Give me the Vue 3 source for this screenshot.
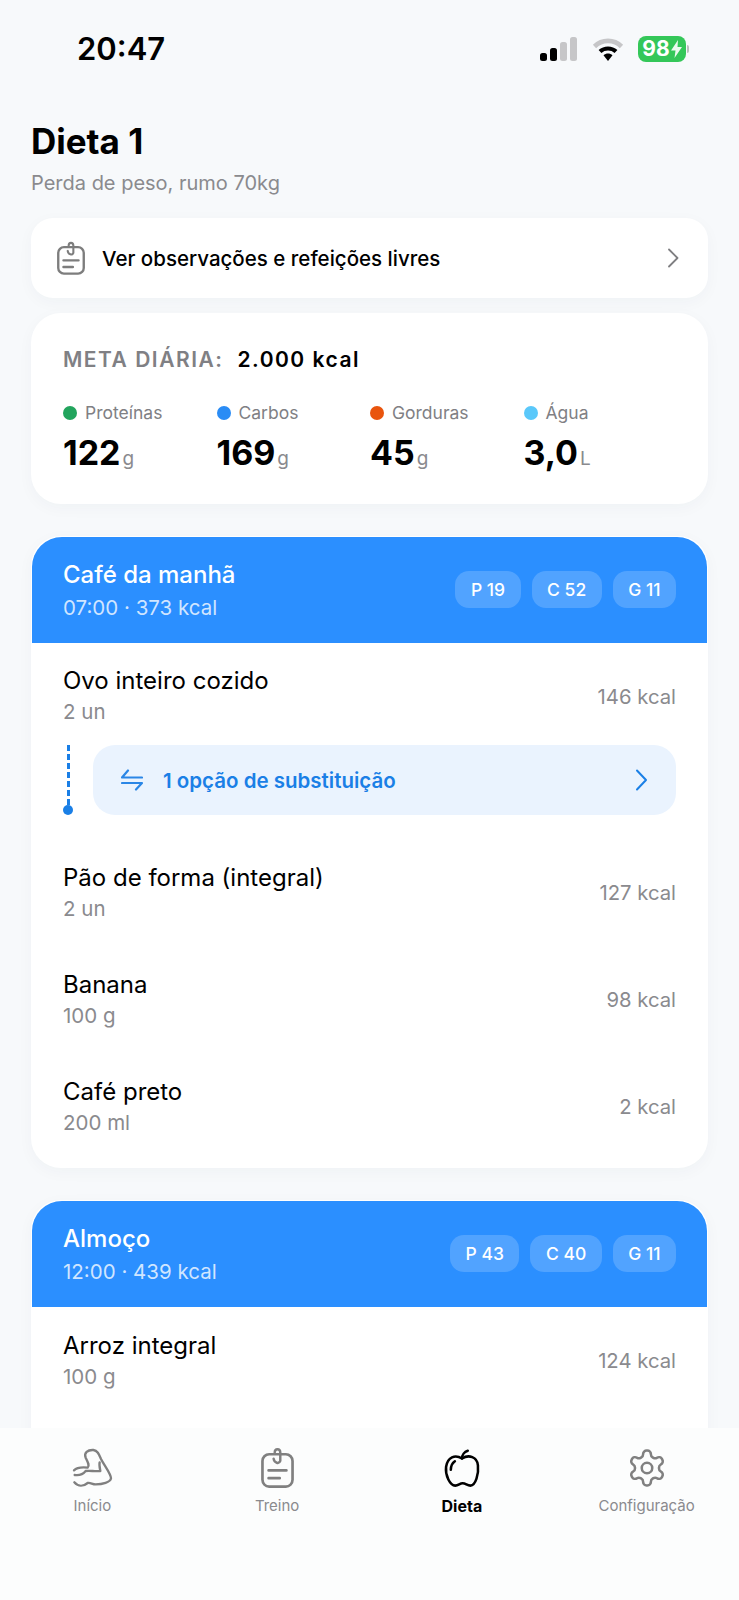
<script setup>
const macros = [
  { label: 'Proteínas', color: '#22a45d', value: '122', unit: 'g' },
  { label: 'Carbos', color: '#2a8cf5', value: '169', unit: 'g' },
  { label: 'Gorduras', color: '#e9540d', value: '45', unit: 'g' },
  { label: 'Água', color: '#5ac8fa', value: '3,0', unit: 'L' },
]
const meals = [
  {
    name: 'Café da manhã', info: '07:00 · 373 kcal', chips: ['P 19', 'C 52', 'G 11'],
    items: [
      { name: 'Ovo inteiro cozido', qty: '2 un', kcal: '146 kcal', sub: '1 opção de substituição' },
      { name: 'Pão de forma (integral)', qty: '2 un', kcal: '127 kcal' },
      { name: 'Banana', qty: '100 g', kcal: '98 kcal' },
      { name: 'Café preto', qty: '200 ml', kcal: '2 kcal' },
    ],
  },
  {
    name: 'Almoço', info: '12:00 · 439 kcal', chips: ['P 43', 'C 40', 'G 11'], open: true,
    items: [{ name: 'Arroz integral', qty: '100 g', kcal: '124 kcal' }],
  },
]
const gear = 'M12.22 2h-.44a2 2 0 0 0-2 2v.18a2 2 0 0 1-1 1.73l-.43.25a2 2 0 0 1-2 0l-.15-.08a2 2 0 0 0-2.73.73l-.22.38a2 2 0 0 0 .73 2.73l.15.1a2 2 0 0 1 1 1.72v.51a2 2 0 0 1-1 1.74l-.15.09a2 2 0 0 0-.73 2.73l.22.38a2 2 0 0 0 2.73.73l.15-.08a2 2 0 0 1 2 0l.43.25a2 2 0 0 1 1 1.73V20a2 2 0 0 0 2 2h.44a2 2 0 0 0 2-2v-.18a2 2 0 0 1 1-1.73l.43-.25a2 2 0 0 1 2 0l.15.08a2 2 0 0 0 2.73-.73l.22-.39a2 2 0 0 0-.73-2.73l-.15-.08a2 2 0 0 1-1-1.74v-.5a2 2 0 0 1 1-1.74l.15-.09a2 2 0 0 0 .73-2.73l-.22-.38a2 2 0 0 0-2.73-.73l-.15.08a2 2 0 0 1-2 0l-.43-.25a2 2 0 0 1-1-1.73V4a2 2 0 0 0-2-2z'
</script>

<template>
  <div class="page">
    <header class="status">
      <span class="time">20:47</span>
      <div class="status-icons">
        <svg width="37" height="24" viewBox="0 0 37 24">
          <rect x="0" y="16" width="7" height="8" rx="2.5" fill="#000" />
          <rect x="10" y="11" width="7" height="13" rx="2.5" fill="#000" />
          <rect x="20" y="5" width="7" height="19" rx="2.5" fill="#c6c6c8" />
          <rect x="30" y="0" width="7" height="24" rx="2.5" fill="#c6c6c8" />
        </svg>
        <svg class="wifi" width="32" height="24" viewBox="0 0 32 24" fill="none">
          <path d="M2.5 9.5C10 2 22 2 29.5 9.5" stroke="#c6c6c8" stroke-width="4.6" />
          <path d="M8 14.5C12.5 10.5 19.500 10.500 24 14.5" stroke="#000" stroke-width="4.2" />
          <path d="M11.500 18.200C14 16 18 16 20.500 18.200L16 24Z" fill="#000" />
        </svg>
        <div class="battery">
          <div class="battery-body">
            <span>98</span>
            <svg width="11" height="18" viewBox="0 0 11 18"><path d="M7 0L0 10.500H4.500L3.500 18L11 7H6.500Z" fill="#fff" fill-opacity=".9" /></svg>
          </div>
          <i class="battery-cap"></i>
        </div>
      </div>
    </header>

    <main class="content">
      <h1>Dieta 1</h1>
      <p class="subtitle">Perda de peso, rumo 70kg</p>

      <div class="card notes">
        <svg width="32" height="34" viewBox="-0.5 0 32 36" fill="none" stroke="#7d7d7d" stroke-width="2.500" stroke-linecap="round">
          <rect x="2" y="6.500" width="27" height="28" rx="6" />
          <path d="M12 10.500C12.500 14.500 17 15.500 18 12.500V5C18 1 13 1 13 5" stroke-width="2.200" />
          <path d="M7.500 20.500H23.500M7.500 27.500H17.500" />
        </svg>
        <span class="notes-text">Ver observações e refeições livres</span>
        <svg width="12" height="20" viewBox="0 0 12 20" fill="none" stroke="#7f7f82" stroke-width="1.800" stroke-linecap="round" stroke-linejoin="round"><path d="M2 1.500L10.500 10L2 18.500" /></svg>
      </div>

      <section class="card goal">
        <div class="goal-line"><span class="goal-label">META DIÁRIA:</span><span class="goal-value">2.000 kcal</span></div>
        <div class="macros">
          <div v-for="m in macros" :key="m.label" class="macro">
            <div class="macro-label"><i :style="{ background: m.color }"></i>{{ m.label }}</div>
            <div class="macro-value">{{ m.value }}<small>{{ m.unit }}</small></div>
          </div>
        </div>
      </section>

      <section v-for="meal in meals" :key="meal.name" class="meal" :class="{ open: meal.open }">
        <div class="meal-head">
          <div>
            <div class="meal-name">{{ meal.name }}</div>
            <div class="meal-info">{{ meal.info }}</div>
          </div>
          <div class="chips"><span v-for="c in meal.chips" :key="c" class="chip">{{ c }}</span></div>
        </div>
        <template v-for="item in meal.items" :key="item.name">
          <div class="row" :class="{ 'has-sub': item.sub }">
            <div>
              <div class="row-name">{{ item.name }}</div>
              <div class="row-qty">{{ item.qty }}</div>
            </div>
            <span class="row-kcal">{{ item.kcal }}</span>
          </div>
          <div v-if="item.sub" class="sub-wrap">
            <div class="connector"><i class="dash"></i><i class="dot"></i></div>
            <div class="sub">
              <svg width="22" height="24" viewBox="0 0 22 24" fill="none" stroke="#2a86e6" stroke-width="2.200" stroke-linecap="round" stroke-linejoin="round">
                <path d="M7 2.500L1 9.500H21M1 15H21L15 21.500" />
              </svg>
              <span class="sub-text">{{ item.sub }}</span>
              <svg width="13" height="22" viewBox="0 0 13 22" fill="none" stroke="#1a7fe6" stroke-width="2" stroke-linecap="round" stroke-linejoin="round"><path d="M2 1.500L11 11L2 20.500" /></svg>
            </div>
          </div>
        </template>
      </section>
    </main>

    <nav class="tabs">
      <div class="tab">
        <svg width="51" height="42" viewBox="6 6 153 126" fill="none" stroke="#808080" stroke-width="7" stroke-linecap="round" stroke-linejoin="round">
          <path d="M27 76C37 66 50 66 68 68C75 62 68 50 62 38C56 24 68 14 85 15C98 17 102 28 108 42C118 62 138 86 138 100C136 112 112 118 92 118C82 118 76 112 68 114C56 124 40 126 28 112" />
          <path d="M29 90C42 92 54 88 62 78C75 76 90 80 106 78C104 68 102 60 104 52" />
        </svg>
        <span>Início</span>
      </div>
      <div class="tab">
        <svg width="39" height="42" viewBox="-2 0 35 37.700" fill="none" stroke="#808080" stroke-width="2.400" stroke-linecap="round">
          <rect x="2" y="6.500" width="27" height="29" rx="6" />
          <path d="M12 10.500C12.500 14.500 17 15.500 18 12.500V5C18 1 13 1 13 5" stroke-width="2.200" />
          <path d="M7.500 21H23.500M7.500 28H17.500" />
        </svg>
        <span>Treino</span>
      </div>
      <div class="tab active">
        <svg width="40" height="42" viewBox="66 52 118 122" fill="none" stroke="#000" stroke-width="7.500" stroke-linecap="round" stroke-linejoin="round">
          <path d="M125 85C105 72 82 80 78 110C75 135 90 165 105 165C115 165 118 158 127 158C136 158 140 165 150 165C165 165 175 130 172 105C170 80 145 72 125 85Z" />
          <path d="M125 85C125 75 132 65 142 62M92 118C92 105 97 98 104 93" />
        </svg>
        <span>Dieta</span>
      </div>
      <div class="tab">
        <svg width="42" height="42" viewBox="0 0 24 24" fill="none" stroke="#808080" stroke-width="1.450" stroke-linecap="round" stroke-linejoin="round">
          <path :d="gear" />
          <circle cx="12" cy="12" r="3" />
        </svg>
        <span>Configuração</span>
      </div>
    </nav>
  </div>
</template>

<style scoped>
.page {
  position: relative;
  width: 739px;
  height: 1600px;
  overflow: hidden;
  background: #f7f9fb;
  color: #000;
  font-family: Inter, "Liberation Sans", sans-serif;
}
.status {
  height: 98px;
  display: flex;
  justify-content: space-between;
  align-items: flex-start;
  padding: 31px 50px 0 77px;
  box-sizing: border-box;
}
.time { font-size: 31px; line-height: 36px; font-weight: 600; }
.status-icons { display: flex; align-items: center; height: 36px; }
.status-icons > svg:first-child { margin: 0 15px 0 0; }
.wifi { margin-right: 14px; }
.battery { display: flex; align-items: center; }
.battery-body {
  width: 48px;
  height: 26px;
  border-radius: 8px;
  background: #34c759;
  color: #fff;
  font-size: 21px;
  font-weight: 700;
  line-height: 26px;
  display: flex;
  align-items: center;
  justify-content: center;
  gap: 1px;
}
.battery-cap { width: 2px; height: 8px; margin-left: 1px; border-radius: 0 2px 2px 0; background: #bdbdbd; }
.content { padding: 0 31px; }
h1 { margin: 23px 0 0; font-size: 35px; line-height: 40px; font-weight: 700; }
.subtitle { margin: 8px 0 21px; font-size: 20px; line-height: 28px; color: #8a8a8e; }
.card {
  background: #fff;
  box-shadow: 0 4px 16px rgba(30, 50, 90, .035);
}
.notes {
  height: 80px;
  border-radius: 22px;
  display: flex;
  align-items: center;
  padding: 0 29px 0 24px;
  box-sizing: border-box;
}
.notes-text { flex: 1; margin-left: 15px; font-size: 20.500px; font-weight: 500; }
.goal {
  height: 191px;
  margin-top: 15px;
  border-radius: 30px;
  padding: 32px 32px 0;
  box-sizing: border-box;
}
.goal-line { display: flex; align-items: center; height: 28px; gap: 14px; font-size: 21px; font-weight: 600; letter-spacing: 1.500px; }
.goal-label { color: #808084; }
.macros { display: grid; grid-template-columns: repeat(4, 153.500px); margin-top: 27px; }
.macro-label { display: flex; align-items: center; gap: 8px; font-size: 17.500px; line-height: 26px; color: #808084; }
.macro-label i { width: 14px; height: 14px; border-radius: 50%; }
.macro-value { margin-top: 6px; font-size: 34px; line-height: 42px; font-weight: 700; }
.macro-value small { margin-left: 2px; font-size: 19px; font-weight: 400; color: #8a8a8e; }
.meal {
  margin-top: 32px;
  background: #fff;
  border-radius: 30px;
  padding: 1px 0 8px;
  box-shadow: 0 4px 16px rgba(30, 50, 90, .035);
}
.meal.open { padding-bottom: 200px; }
.meal-head {
  height: 106px;
  margin: 0 1px;
  padding: 3px 31px 0;
  box-sizing: border-box;
  border-radius: 30px 30px 0 0;
  background: #2b8fff;
  color: #fff;
  display: flex;
  align-items: center;
  justify-content: space-between;
}
.meal-name { font-size: 24px; line-height: 30px; font-weight: 500; }
.meal-info { margin-top: 3px; font-size: 20.500px; line-height: 30px; color: rgba(255, 255, 255, .78); }
.chips { display: flex; gap: 11px; margin-top: -5px; }
.chip {
  height: 37px;
  padding: 0 15.500px;
  border-radius: 14px;
  background: rgba(255, 255, 255, .18);
  font-size: 17.500px;
  font-weight: 500;
  line-height: 37px;
}
.row {
  height: 107px;
  padding: 0 32px;
  box-sizing: border-box;
  display: flex;
  align-items: center;
  justify-content: space-between;
}
.row.has-sub { height: 102px; padding-top: 4px; }
.row-name { font-size: 24px; line-height: 31px; }
.row-qty { font-size: 20.500px; line-height: 31px; color: #8a8a8e; }
.row-kcal { font-size: 20.300px; color: #8a8a8e; }
.sub-wrap { display: flex; height: 70px; margin: 0 32px 24px; }
.connector {
  width: 10px;
  margin-right: 20px;
  display: flex;
  flex-direction: column;
  align-items: center;
}
.dash { flex: 1; border-left: 3px dashed #1a7fe6; }
.dot { width: 10px; height: 10px; margin-bottom: 0; border-radius: 50%; background: #1a7fe6; }
.sub {
  flex: 1;
  display: flex;
  align-items: center;
  padding: 0 28px 0 28px;
  border-radius: 22px;
  background: #eaf3fe;
}
.sub-text { flex: 1; margin-left: 20px; font-size: 20.500px; font-weight: 600; color: #1a7fe6; }
.tabs {
  position: absolute;
  left: 0;
  right: 0;
  bottom: 0;
  height: 172px;
  display: grid;
  grid-template-columns: repeat(4, 1fr);
  padding: 19px 0 0;
  box-sizing: border-box;
  background: #fcfdfd;
}
.tab {
  display: flex;
  flex-direction: column;
  align-items: center;
  font-size: 15px;
  line-height: 24px;
  color: #8a8a8e;
}
.tab svg { height: 42px; margin-bottom: 5px; }
.tab.active { color: #000; font-size: 16px; font-weight: 700; }
</style>
